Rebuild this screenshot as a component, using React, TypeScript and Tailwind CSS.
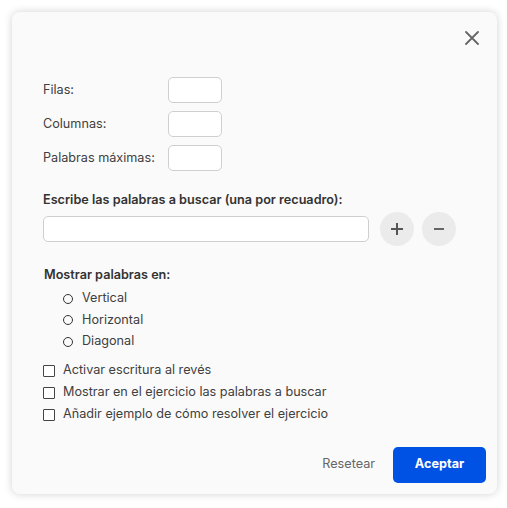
import React from "react";

export default function App() {
  const font = { fontFamily: "Inter, 'Noto Sans', sans-serif" };
  return (
    <div className="w-[507px] h-[508px] bg-white p-[12px]" style={font}>
      <div className="w-[485px] h-[482px] bg-[#fafafa] rounded-[8px] shadow-[0_0_8px_rgba(0,0,0,0.18)] flex flex-col px-[31px] pt-[19px]">
        <div className="flex justify-end -mr-[13px]">
          <svg width="14" height="14" viewBox="0 0 14 14">
            <path d="M1 1 L13 13 M13 1 L1 13" stroke="#666" strokeWidth="1.8" strokeLinecap="round" />
          </svg>
        </div>
        <div className="mt-[32px] flex flex-col gap-[8px]">
          {["Filas:", "Columnas:", "Palabras máximas:"].map((l) => (
            <div key={l} className="flex items-center">
              <span className="w-[125px] text-[12.65px] text-[#404040] pt-[1px]">{l}</span>
              <div className="w-[54px] h-[26px] bg-white border border-[#cfcfcf] rounded-[5px]" />
            </div>
          ))}
        </div>
        <div className="mt-[20px] text-[12.65px] font-semibold text-[#333]">
          Escribe las palabras a buscar (una por recuadro):
        </div>
        <div className="mt-[2px] flex items-center">
          <div className="w-[326px] h-[26px] bg-white border border-[#cfcfcf] rounded-[5px]" />
          <div className="ml-[11px] w-[34px] h-[34px] rounded-full bg-[#ebebeb] flex items-center justify-center">
            <svg width="14" height="14" viewBox="0 0 14 14">
              <path d="M7 1 V13 M1 7 H13" stroke="#555" strokeWidth="2" />
            </svg>
          </div>
          <div className="ml-[8px] w-[34px] h-[34px] rounded-full bg-[#ebebeb] flex items-center justify-center">
            <svg width="12" height="12" viewBox="0 0 12 12">
              <path d="M1 6 H11" stroke="#666" strokeWidth="2" />
            </svg>
          </div>
        </div>
        <div className="mt-[20px] ml-[1px] text-[12.65px] font-semibold text-[#333]">Mostrar palabras en:</div>
        <div className="mt-[5px] ml-[20px] flex flex-col gap-[3.5px]">
          {["Vertical", "Horizontal", "Diagonal"].map((l) => (
            <div key={l} className="flex items-center h-[18px]">
              <div className="w-[10px] h-[10px] rounded-full border-[1.5px] border-[#333]" />
              <span className="ml-[9px] text-[12.65px] text-[#404040]">{l}</span>
            </div>
          ))}
        </div>
        <div className="mt-[11px] flex flex-col gap-[4px]">
          {[
            "Activar escritura al revés",
            "Mostrar en el ejercicio las palabras a buscar",
            "Añadir ejemplo de cómo resolver el ejercicio",
          ].map((l) => (
            <div key={l} className="flex items-center h-[18px]">
              <div className="w-[12px] h-[12px] rounded-[1px] border-[1.5px] border-[#444] bg-white" />
              <span className="ml-[8px] text-[12.65px] text-[#404040]">{l}</span>
            </div>
          ))}
        </div>
        <div className="mt-[23px] flex items-center justify-end -mr-[20px]">
          <span className="text-[12.65px] text-[#666] mr-[18px]">Resetear</span>
          <div className="w-[93px] h-[36px] rounded-[5px] bg-[#0052e4] flex items-center justify-center text-white text-[12.65px] font-bold">
            Aceptar
          </div>
        </div>
      </div>
    </div>
  );
}
